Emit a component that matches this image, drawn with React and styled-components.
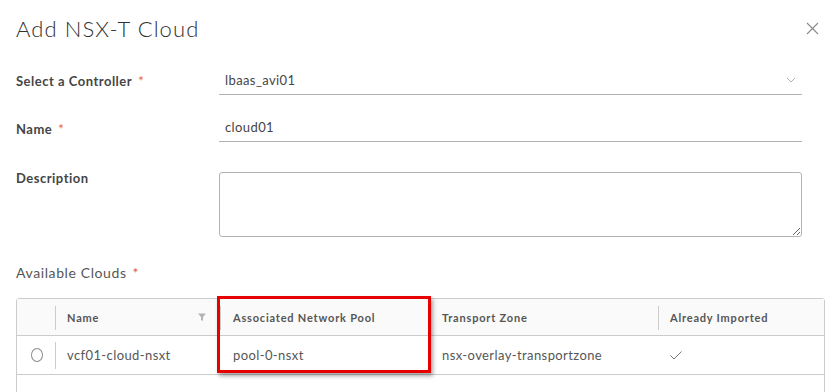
import React from "react";
import styled, { createGlobalStyle } from "styled-components";

const GlobalStyle = createGlobalStyle`
  html, body {
    margin: 0;
    padding: 0;
    background: #fff;
  }
  body {
    font-family: Lato, "Open Sans", sans-serif;
    color: #565656;
  }
`;

const Modal = styled.div`
  width: 840px;
  padding: 0 15px 0 16px;
  box-sizing: border-box;
`;

const Header = styled.div`
  height: 56px;
  display: flex;
  align-items: center;
  justify-content: space-between;
  margin-bottom: 10px;
`;

const Title = styled.h3`
  margin: 0;
  font-size: 22px;
  font-weight: 300;
  color: #313131;
  letter-spacing: 1.1px;
`;

const CloseButton = styled.button`
  border: 0;
  background: none;
  padding: 0;
  width: 14px;
  height: 14px;
  margin-right: 6px;
  display: flex;
  align-items: center;
  justify-content: center;
  cursor: pointer;
`;

const FormRow = styled.div`
  display: grid;
  grid-template-columns: 203px 583px;
  align-items: ${(p) => (p.$top ? "start" : "center")};
  margin-bottom: ${(p) => p.$gap || 0}px;
`;

const Label = styled.label`
  font-size: 13px;
  font-weight: 700;
  color: #454545;
  line-height: 16px;
  letter-spacing: 0.5px;
  margin-top: ${(p) => p.$offset || 0}px;
`;

const Required = styled.span`
  color: #e85a4a;
  margin-left: 6px;
  font-weight: 400;
`;

const Underlined = styled.div`
  height: 28px;
  display: flex;
  align-items: center;
  justify-content: space-between;
  border-bottom: 1px solid #b3b3b3;
  padding: 0 6px;
  font-size: 13px;
  color: #454545;
  letter-spacing: 0.4px;
`;

const TextArea = styled.textarea`
  height: 65px;
  box-sizing: border-box;
  border: 1px solid #b3b3b3;
  border-radius: 3px;
  resize: vertical;
  font-family: inherit;
  margin: 0;
  display: block;
`;

const SectionLabel = styled.div`
  font-size: 14px;
  color: #565656;
  margin: 28px 0 17px;
  line-height: 16px;
  letter-spacing: 0.6px;
`;

const TableWrap = styled.div`
  position: relative;
  width: 809px;
`;

const Table = styled.div`
  border: 1px solid #ccc;
  border-radius: 3px;
  height: 110px;
  box-sizing: border-box;
`;

const Row = styled.div`
  display: grid;
  grid-template-columns: 38px 165px 210px 228px 1fr;
  height: ${(p) => (p.$head ? 36 : 38)}px;
  border-bottom: 1px solid #ccc;
  background: ${(p) => (p.$head ? "#fafafa" : "#fff")};
`;

const Cell = styled.div`
  position: relative;
  display: flex;
  align-items: center;
  justify-content: space-between;
  padding: 0 12px 0 ${(p) => p.$indent || 12}px;
  font-size: ${(p) => (p.$head ? 11 : 13)}px;
  font-weight: ${(p) => (p.$head ? 700 : 400)};
  color: #565656;
  letter-spacing: ${(p) => (p.$head ? 0.8 : 0.4)}px;

  ${(p) =>
    p.$sep &&
    `&::before {
      content: "";
      position: absolute;
      left: 0;
      top: ${p.$head ? 7 : 6}px;
      bottom: 5px;
      width: 1px;
      background: #ccc;
    }`}
`;

const FilterSlot = styled.span`
  display: flex;
  margin-right: 2px;
`;

const Radio = styled.span`
  width: 14px;
  height: 14px;
  border-radius: 50%;
  border: 1px solid #8c8c8c;
  box-sizing: border-box;
  margin-left: 2px;
`;

const Highlight = styled.div`
  position: absolute;
  left: 201px;
  top: -2px;
  width: 214px;
  height: 77px;
  border: 3px solid #e60000;
  box-sizing: border-box;
  box-shadow: 2px 3px 4px rgba(0, 0, 0, 0.35);
  pointer-events: none;
`;

const CloseIcon = () => (
  <svg width="13" height="13" viewBox="0 0 13 13">
    <path d="M1 1L12 12M12 1L1 12" stroke="#8a8a8a" strokeWidth="1.1" />
  </svg>
);

const Chevron = () => (
  <svg width="10" height="6" viewBox="0 0 10 6">
    <path d="M1 1L5 5L9 1" stroke="#b0b0b0" strokeWidth="1" fill="none" />
  </svg>
);

const Filter = () => (
  <svg width="8" height="8" viewBox="0 0 8 8">
    <path d="M0 0.5H8L5 4V8L3 7V4Z" fill="#b3b3b3" />
  </svg>
);

const Check = () => (
  <svg width="12" height="9" viewBox="0 0 12 9">
    <path d="M0.5 4.5L4 8L11.5 0.5" stroke="#6a6a6a" strokeWidth="0.9" fill="none" />
  </svg>
);

export default function App() {
  return (
    <Modal>
      <GlobalStyle />
      <Header>
        <Title>Add NSX-T Cloud</Title>
        <CloseButton aria-label="Close">
          <CloseIcon />
        </CloseButton>
      </Header>

      <FormRow $gap={18}>
        <Label>
          Select a Controller<Required>*</Required>
        </Label>
        <Underlined>
          <span>lbaas_avi01</span>
          <Chevron />
        </Underlined>
      </FormRow>

      <FormRow $gap={30}>
        <Label $offset={2}>
          Name<Required>*</Required>
        </Label>
        <Underlined>cloud01</Underlined>
      </FormRow>

      <FormRow $top>
        <Label $offset={-2}>Description</Label>
        <TextArea />
      </FormRow>

      <SectionLabel>
        Available Clouds<Required>*</Required>
      </SectionLabel>

      <TableWrap>
        <Table>
          <Row $head>
            <Cell $head />
            <Cell $head $sep>
              Name
              <FilterSlot>
                <Filter />
              </FilterSlot>
            </Cell>
            <Cell $head $sep $indent={13}>Associated Network Pool</Cell>
            <Cell $head $sep>Transport Zone</Cell>
            <Cell $head $sep>Already Imported</Cell>
          </Row>
          <Row>
            <Cell>
              <Radio />
            </Cell>
            <Cell $sep>vcf01-cloud-nsxt</Cell>
            <Cell $indent={13}>pool-0-nsxt</Cell>
            <Cell>nsx-overlay-transportzone</Cell>
            <Cell>
              <Check />
            </Cell>
          </Row>
        </Table>
        <Highlight />
      </TableWrap>
    </Modal>
  );
}
